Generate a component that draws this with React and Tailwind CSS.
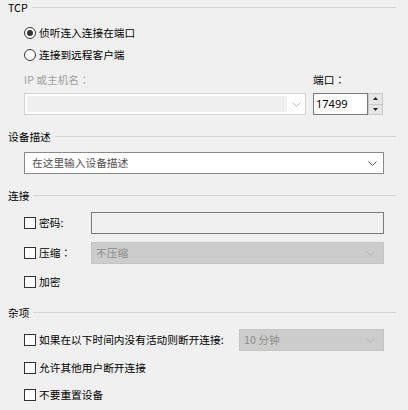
import React from 'react'

const font = { fontFamily: '"Noto Sans CJK SC", "Noto Sans", sans-serif' }
const tc = { fontFamily: '"Noto Sans CJK TC", sans-serif' }

function Chevron({ color = '#6b6b6b' }) {
  return (
    <svg width="9" height="5" viewBox="0 0 9 5" className="shrink-0">
      <polyline points="0.5,0.5 4.5,4.5 8.5,0.5" fill="none" stroke={color} strokeWidth="1" />
    </svg>
  )
}

function Header({ title }) {
  return (
    <div className="flex items-center h-4 pl-2 pr-3 gap-1">
      <span className="text-black leading-none">{title}</span>
      <div className="flex-1 h-[2px] border-t border-[#d5d5d5] border-b-white" />
    </div>
  )
}

function Radio({ checked, label }) {
  return (
    <div className="flex items-center h-[22px] pl-6 gap-[3px]">
      <div className="w-3 h-3 rounded-full border border-[#333] bg-white flex items-center justify-center">
        {checked && <div className="w-[6px] h-[6px] rounded-full bg-[#333]" />}
      </div>
      <span className="text-black">{label}</span>
    </div>
  )
}

function Check({ label }) {
  return (
    <div className="flex items-center gap-[3px] shrink-0">
      <div className="w-3 h-3 border border-[#333] bg-white" />
      <span className="text-black whitespace-nowrap">{label}</span>
    </div>
  )
}

function DisabledCombo({ text, className = '' }) {
  return (
    <div className={`h-[22px] bg-[#cccccc] border border-[#c4c4c4] flex items-center justify-between pl-[4px] pr-[8px] ${className}`}>
      <span className="text-[#8c8c8c]">{text}</span>
      <Chevron color="#b4b4b4" />
    </div>
  )
}

export default function App() {
  return (
    <div style={font} className="w-[408px] h-[410px] bg-[#f0f0f0] text-[10.7px] overflow-hidden">
      {/* TCP */}
      <Header title="TCP" />
      <div className="mt-[6px]">
        <Radio checked label="侦听连入连接在端口" />
        <Radio label="连接到远程客户端" />
      </div>
      <div className="flex pl-6 mt-1">
        <div className="w-[282px]">
          <div className="h-5 flex items-center text-[#a0a0a0]">IP 或主机名<span style={tc}>：</span></div>
          <div className="mt-[3px] h-[22px] border border-[#d0d0d0] bg-white flex">
            <div className="flex-1 m-[2px] mr-0 bg-[#efefef]" />
            <div className="w-[18px] flex items-center justify-center">
              <Chevron color="#b8b8b8" />
            </div>
          </div>
        </div>
        <div className="ml-[7px]">
          <div className="h-5 flex items-center text-black">端口<span style={tc}>：</span></div>
          <div className="mt-[3px] flex">
            <div className="w-[55px] h-[22px] border border-[#7a7a7a] bg-white flex items-center pl-[2px] text-[11px] text-black" style={{ fontFamily: '"Noto Sans", sans-serif' }}>
              17499
            </div>
            <div className="w-[15px] h-[22px] border border-[#c8c8c8] bg-[#e6e6e6] flex flex-col">
              <div className="flex-1 border-b border-[#c8c8c8] flex items-center justify-center">
                <svg width="5" height="3" viewBox="0 0 5 3"><polygon points="2.5,0 5,3 0,3" fill="#222" /></svg>
              </div>
              <div className="flex-1 flex items-center justify-center">
                <svg width="5" height="3" viewBox="0 0 5 3"><polygon points="0,0 5,0 2.5,3" fill="#222" /></svg>
              </div>
            </div>
          </div>
        </div>
      </div>

      {/* 设备描述 */}
      <div className="mt-[14px]">
        <Header title="设备描述" />
      </div>
      <div className="mt-[7px] ml-6 w-[360px] h-[22px] border border-[#8a8a8a] bg-white flex items-center justify-between pl-[7px] pr-[6px]">
        <span className="text-[#505050]">在这里输入设备描述</span>
        <Chevron color="#555" />
      </div>

      {/* 连接 */}
      <div className="mt-[14px]">
        <Header title="连接" />
      </div>
      <div className="mt-2 flex items-center pl-6 h-[22px]">
        <div className="w-[67px]"><Check label="密码:" /></div>
        <div className="w-[293px] h-[22px] border border-[#7a7a7a] bg-[#f0f0f0]" />
      </div>
      <div className="mt-2 flex items-center pl-6 h-[22px]">
        <div className="w-[67px]"><Check label={<>压缩<span style={tc}>：</span></>} /></div>
        <DisabledCombo text="不压缩" className="w-[293px]" />
      </div>
      <div className="mt-[7px] flex items-center pl-6 h-[22px]">
        <Check label="加密" />
      </div>

      {/* 杂项 */}
      <div className="mt-3">
        <Header title="杂项" />
      </div>
      <div className="mt-2 flex items-center pl-6 h-[22px]">
        <div className="w-[215px]"><Check label="如果在以下时间内没有活动则断开连接:" /></div>
        <DisabledCombo text="10 分钟" className="w-[145px]" />
      </div>
      <div className="mt-[6px] flex items-center pl-6 h-[22px]">
        <Check label="允许其他用户断开连接" />
      </div>
      <div className="mt-[5px] flex items-center pl-6 h-[22px]">
        <Check label="不要重置设备" />
      </div>
    </div>
  )
}
